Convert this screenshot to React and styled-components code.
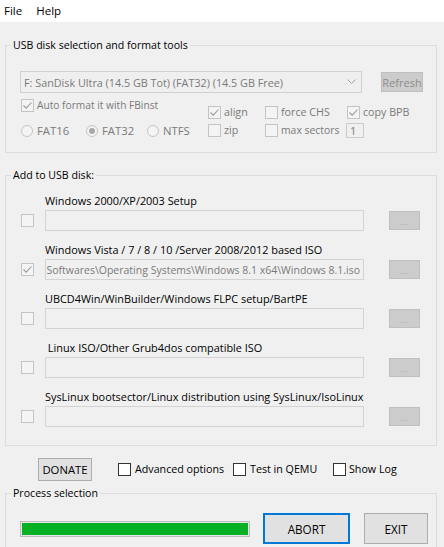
import React from "react";
import styled, { createGlobalStyle, css } from "styled-components";

const GlobalStyle = createGlobalStyle`
  html, body {
    margin: 0;
    padding: 0;
    background: #f0f0f0;
  }
  body {
    font-family: "Open Sans", "Noto Sans", "Liberation Sans", sans-serif;
    font-size: 11px;
    color: #000;
  }
`;

const DISABLED_TEXT = "#7a7a7a";

const Window = styled.div`
  width: 444px;
  height: 547px;
  overflow: hidden;
  background: #f0f0f0;
  display: flex;
  flex-direction: column;
`;

const MenuBar = styled.div`
  height: 22px;
  flex: none;
  background: #ffffff;
  display: flex;
  align-items: center;
  gap: 14px;
  padding-left: 4px;
  font-size: 11.5px;
  line-height: 14px;
`;

const MenuItem = styled.span`
  color: #000;
`;

const Body = styled.div`
  display: flex;
  flex-direction: column;
  padding: 0 7px 0 5px;
`;

const GroupBox = styled.fieldset`
  margin: ${(p) => p.$mt}px 0 0;
  padding: 0;
  border: 1px solid #dcdcdc;
  min-width: 0;
`;

const Legend = styled.legend`
  margin-left: 5px;
  padding: 0 2px;
  line-height: 14px;
  font-size: 10.6px;
  color: #000;
`;

const GroupInner = styled.div`
  padding: ${(p) => p.$pad};
`;

/* ---------- small controls ---------- */

const Box = styled.span`
  flex: none;
  width: 13px;
  height: 13px;
  box-sizing: border-box;
  display: inline-flex;
  align-items: center;
  justify-content: center;
  ${(p) =>
    p.$disabled
      ? css`
          border: 1px solid #c4c4c4;
          background: #f4f4f4;
        `
      : css`
          border: 1px solid #333333;
          background: #ffffff;
        `}
`;

const CheckMark = ({ color }) => (
  <svg width="11" height="11" viewBox="0 0 11 11">
    <path d="M1.5 5.5 L4.2 8.2 L9.5 2.5" fill="none" stroke={color} strokeWidth="1.1" />
  </svg>
);

const CheckLabel = styled.label`
  display: inline-flex;
  align-items: center;
  gap: ${(p) => p.$gap ?? 3}px;
  height: 13px;
  white-space: nowrap;
  line-height: 13px;
  font-size: ${(p) => p.$fs ?? 10.7}px;
  color: ${(p) => (p.$disabled ? DISABLED_TEXT : "#000")};
`;

const CheckBox = ({ label, checked, disabled, gap, fs }) => (
  <CheckLabel $disabled={disabled} $gap={gap} $fs={fs}>
    <Box $disabled={disabled}>{checked && <CheckMark color={disabled ? "#9a9a9a" : "#222"} />}</Box>
    {label}
  </CheckLabel>
);

const RadioCircle = styled.span`
  flex: none;
  width: 12px;
  height: 12px;
  box-sizing: border-box;
  border-radius: 50%;
  border: 1px solid #c4c4c4;
  background: #f4f4f4;
  display: inline-flex;
  align-items: center;
  justify-content: center;
  &::after {
    content: "";
    width: 6px;
    height: 6px;
    border-radius: 50%;
    background: ${(p) => (p.$on ? "#a8a8a8" : "transparent")};
  }
`;

const RadioLabel = styled.label`
  display: inline-flex;
  align-items: center;
  gap: 4px;
  height: 13px;
  white-space: nowrap;
  color: ${DISABLED_TEXT};
  font-size: 11.3px;
`;

const Radio = ({ label, on }) => (
  <RadioLabel>
    <RadioCircle $on={on} />
    {label}
  </RadioLabel>
);

const Button = styled.button`
  box-sizing: border-box;
  width: ${(p) => p.$w}px;
  height: ${(p) => p.$h}px;
  margin: 0 0 0 ${(p) => p.$ml ?? 0}px;
  padding: 0;
  font-family: inherit;
  font-size: ${(p) => p.$fs ?? 11}px;
  flex: none;
  display: inline-flex;
  align-items: center;
  justify-content: center;
  ${(p) =>
    p.$variant === "disabled"
      ? css`
          background: #cccccc;
          border: 1px solid #bfbfbf;
          color: #8c8c8c;
        `
      : p.$variant === "default"
      ? css`
          background: #e1e1e1;
          border: 1px solid #0078d7;
          box-shadow: inset 0 0 0 1px #0078d7;
          color: #000;
        `
      : css`
          background: #e1e1e1;
          border: 1px solid #adadad;
          color: #000;
        `}
`;

/* ---------- disk selection group ---------- */

const DiskRow = styled.div`
  display: flex;
  align-items: center;
`;

const Combo = styled.div`
  box-sizing: border-box;
  width: 342px;
  height: 22px;
  border: 1px solid #d0d0d0;
  background: #efefef;
  display: flex;
  align-items: center;
  padding-left: 3px;
  color: ${DISABLED_TEXT};
  font-size: 10.8px;
`;

const ComboText = styled.span`
  flex: 1;
  white-space: nowrap;
  overflow: hidden;
`;

const ComboArrow = styled.span`
  flex: none;
  width: 20px;
  display: flex;
  justify-content: center;
`;

const OptionsArea = styled.div`
  display: flex;
  align-items: flex-start;
`;

const LeftCol = styled.div`
  width: 187px;
  padding-left: 1px;
  margin-top: 6px;
  display: flex;
  flex-direction: column;
  gap: 12px;
`;

const RadioRow = styled.div`
  display: grid;
  grid-template-columns: 65px 61px auto;
  align-items: center;
`;

const RightGrid = styled.div`
  margin-top: 13px;
  display: grid;
  grid-template-columns: 57px 82px auto;
  row-gap: 4px;
  align-items: center;
`;

const SmallField = styled.span`
  box-sizing: border-box;
  width: 18px;
  height: 15px;
  margin-left: -1px;
  border: 1px solid #cccccc;
  background: #f0f0f0;
  color: ${DISABLED_TEXT};
  padding-left: 3px;
  line-height: 13px;
  font-size: 11px;
`;

/* ---------- source entries ---------- */

const EntryList = styled.div`
  display: flex;
  flex-direction: column;
  gap: 12px;
`;

const Entry = styled.div`
  display: grid;
  grid-template-columns: 24px 319px 25px 31px;
  grid-template-rows: 14px 21px;
  row-gap: 2px;
`;

const EntryTitle = styled.span`
  grid-column: 2 / 5;
  grid-row: 1;
  line-height: 14px;
  white-space: pre;
  font-size: 10.9px;
`;

const EntryCheck = styled.span`
  grid-column: 1;
  grid-row: 2;
  align-self: center;
  display: flex;
`;

const PathField = styled.div`
  grid-column: 2;
  grid-row: 2;
  box-sizing: border-box;
  border: 1px solid #d3d3d3;
  background: #f0f0f0;
  display: flex;
  align-items: center;
  justify-content: flex-end;
  overflow: hidden;
  padding-right: 3px;
  color: ${DISABLED_TEXT};
  white-space: nowrap;
  font-size: 10.5px;
`;

const BrowseSlot = styled.span`
  grid-column: 4;
  grid-row: 2;
  align-self: center;
  display: flex;
`;

const Dots = styled.span`
  letter-spacing: 1px;
  font-size: 8px;
  line-height: 8px;
  color: #a6a6a6;
  margin-top: 3px;
`;

/* ---------- bottom controls ---------- */

const BottomRow = styled.div`
  margin-top: 12px;
  padding-left: 33px;
  display: grid;
  grid-template-columns: 80px 115px 100px auto;
  align-items: center;
`;

const ProgressRow = styled.div`
  display: flex;
  align-items: center;
`;

const Progress = styled.div`
  box-sizing: border-box;
  width: 230px;
  height: 16px;
  border: 1px solid #bcbcbc;
  background: #e6e6e6;
  padding: 1px;
  display: flex;
`;

const ProgressFill = styled.div`
  height: 100%;
  background: #06b025;
`;

const sources = [
  { title: "Windows 2000/XP/2003 Setup" },
  {
    title: "Windows Vista / 7 / 8 / 10 /Server 2008/2012 based ISO",
    checked: true,
    path: "Softwares\\Operating Systems\\Windows 8.1 x64\\Windows 8.1.iso",
  },
  { title: "UBCD4Win/WinBuilder/Windows FLPC setup/BartPE" },
  { title: " Linux ISO/Other Grub4dos compatible ISO" },
  { title: "SysLinux bootsector/Linux distribution using SysLinux/IsoLinux" },
];

export default function App() {
  const progress = 100;
  return (
    <>
      <GlobalStyle />
      <Window>
        <MenuBar>
          <MenuItem>File</MenuItem>
          <MenuItem>Help</MenuItem>
        </MenuBar>
        <Body>
          <GroupBox $mt={16}>
            <Legend>USB disk selection and format tools</Legend>
            <GroupInner $pad="19px 0 14px 14px">
              <DiskRow>
                <Combo>
                  <ComboText>F: SanDisk Ultra (14.5 GB Tot) (FAT32) (14.5 GB Free)</ComboText>
                  <ComboArrow>
                    <svg width="9" height="6" viewBox="0 0 9 6">
                      <path d="M0.5 0.5 L4.5 4.5 L8.5 0.5" fill="none" stroke="#a0a0a0" strokeWidth="1" />
                    </svg>
                  </ComboArrow>
                </Combo>
                <Button $variant="disabled" $w={42} $h={20} $ml={19}>
                  Refresh
                </Button>
              </DiskRow>
              <OptionsArea>
                <LeftCol>
                  <CheckBox label="Auto format it with FBinst" checked disabled fs={10.2} />
                  <RadioRow>
                    <Radio label="FAT16" />
                    <Radio label="FAT32" on />
                    <Radio label="NTFS" />
                  </RadioRow>
                </LeftCol>
                <RightGrid>
                  <CheckBox label="align" checked disabled />
                  <CheckBox label="force CHS" disabled />
                  <CheckBox label="copy BPB" checked disabled />
                  <CheckBox label="zip" disabled />
                  <CheckBox label="max sectors" disabled fs={10.4} />
                  <SmallField>1</SmallField>
                </RightGrid>
              </OptionsArea>
            </GroupInner>
          </GroupBox>

          <GroupBox $mt={15}>
            <Legend>Add to USB disk:</Legend>
            <GroupInner $pad="12px 0 18px 15px">
              <EntryList>
                {sources.map((s) => (
                  <Entry key={s.title}>
                    <EntryTitle>{s.title}</EntryTitle>
                    <EntryCheck>
                      <Box $disabled>{s.checked && <CheckMark color="#9a9a9a" />}</Box>
                    </EntryCheck>
                    <PathField>{s.path}</PathField>
                    <BrowseSlot>
                      <Button $variant="disabled" $w={31} $h={19}>
                        <Dots>...</Dots>
                      </Button>
                    </BrowseSlot>
                  </Entry>
                ))}
              </EntryList>
            </GroupInner>
          </GroupBox>

          <BottomRow>
            <Button $w={54} $h={23} $fs={11.3}>
              DONATE
            </Button>
            <CheckBox label="Advanced options" gap={4} />
            <CheckBox label="Test in QEMU" gap={4} />
            <CheckBox label="Show Log" gap={3} />
          </BottomRow>

          <GroupBox $mt={5}>
            <Legend>Process selection</Legend>
            <GroupInner $pad="13px 0 12px 14px">
              <ProgressRow>
                <Progress>
                  <ProgressFill style={{ width: `${progress}%` }} />
                </Progress>
                <Button $variant="default" $w={87} $h={31} $ml={13} $fs={11.7}>
                  ABORT
                </Button>
                <Button $w={64} $h={31} $ml={14} $fs={11.7}>
                  EXIT
                </Button>
              </ProgressRow>
            </GroupInner>
          </GroupBox>
        </Body>
      </Window>
    </>
  );
}
